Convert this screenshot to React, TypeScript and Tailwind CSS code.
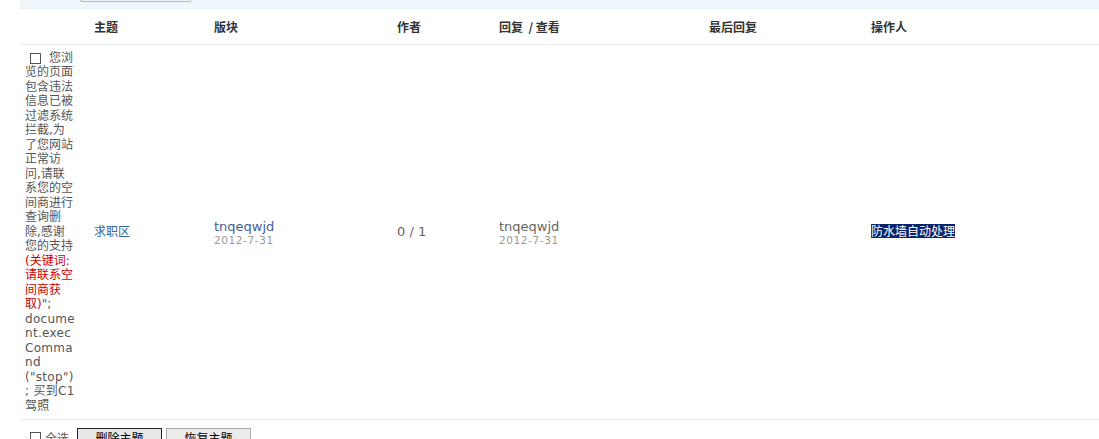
import React from "react";

const lines: { t: string; red?: boolean }[] = [
  { t: "览的页面" },
  { t: "包含违法" },
  { t: "信息已被" },
  { t: "过滤系统" },
  { t: "拦截,为" },
  { t: "了您网站" },
  { t: "正常访" },
  { t: "问,请联" },
  { t: "系您的空" },
  { t: "间商进行" },
  { t: "查询删" },
  { t: "除,感谢" },
  { t: "您的支持" },
  { t: "(关键词:", red: true },
  { t: "请联系空", red: true },
  { t: "间商获", red: true },
];

const tail = ["docume", "nt.exec", "Comma", "nd", '("stop")', "; 买到C1", "驾照"];

export default function App() {
  return (
    <div className="w-[1099px] h-[439px] overflow-hidden bg-white font-['DejaVu_Sans','Noto_Sans_CJK_SC',sans-serif] text-[12px] text-[#444]">
      {/* top band */}
      <div className="ml-[20px] h-[9px] bg-[#f1f6fb] border-b border-[#e6eef6]">
        <div className="ml-[60px] w-[111px] h-[2px] border-b border-x border-[#b5b5b5] rounded-b-[2px] bg-[#f4f4f4]" />
      </div>

      {/* header */}
      <div className="ml-[20px] grid grid-cols-[70px_120px_183px_102px_210px_162px_1fr] h-[36px] items-center border-b border-[#efefef] font-bold text-[#333] font-['Noto_Sans_CJK_SC',sans-serif]">
        <div />
        <div className="pl-[4px]">主题</div>
        <div className="pl-[4px]">版块</div>
        <div className="pl-[4px]">作者</div>
        <div className="pl-[4px]">回复&nbsp; / 查看</div>
        <div className="pl-[4px]">最后回复</div>
        <div className="pl-[4px]">操作人</div>
      </div>

      {/* body row */}
      <div className="ml-[20px] grid grid-cols-[70px_120px_183px_102px_210px_162px_1fr] h-[375px] items-center border-b border-[#efefef]">
        <div className="pl-[5px] leading-[14.5px] text-[#555]">
          <div className="flex items-center">
            <span className="ml-[5px] mr-[8px] inline-block w-[11px] h-[11px] border border-[#555] bg-white" />
            <span>您浏</span>
          </div>
          {lines.map((l, i) => (
            <div key={i} className={l.red ? "text-[#cc0000]" : ""}>
              {l.t}
            </div>
          ))}
          <div>
            <span className="text-[#cc0000]">取)</span>";
          </div>
          {tail.map((t, i) => (
            <div key={i} className="tracking-[0.3px]">
              {t}
            </div>
          ))}
        </div>
        <div className="pl-[4px] text-[#336699]">求职区</div>
        <div className="pl-[4px]">
          <div className="text-[13px] leading-[15px] text-[#3f6190]">tnqeqwjd</div>
          <div className="text-[10.5px] leading-[12px] text-[#999] tracking-[0.6px]">2012-7-31</div>
        </div>
        <div className="pl-[4px] text-[13px] text-[#666]">0 / 1</div>
        <div className="pl-[4px]">
          <div className="text-[13px] leading-[15px] text-[#666]">tnqeqwjd</div>
          <div className="text-[10.5px] leading-[12px] text-[#999] tracking-[0.6px]">2012-7-31</div>
        </div>
        <div />
        <div className="pl-[4px]">
          <span className="bg-[#0a246a] text-white leading-[14px] inline-block font-['Noto_Sans_CJK_SC',sans-serif]">防水墙自动处理</span>
        </div>
      </div>

      {/* bottom */}
      <div className="flex items-start pt-[8px] pl-[30px]">
        <span className="mt-[4px] inline-block w-[11px] h-[11px] border border-[#555] bg-white" />
        <span className="ml-[4px] mt-[2px] text-[#555]">全选</span>
        <button className="ml-[8px] w-[85px] h-[22px] border border-[#222] bg-[#e8e8e8] text-[12px] text-black">删除主题</button>
        <button className="ml-[4px] w-[85px] h-[22px] border border-[#aaa] bg-[#ececec] text-[12px] text-black">恢复主题</button>
      </div>
    </div>
  );
}
